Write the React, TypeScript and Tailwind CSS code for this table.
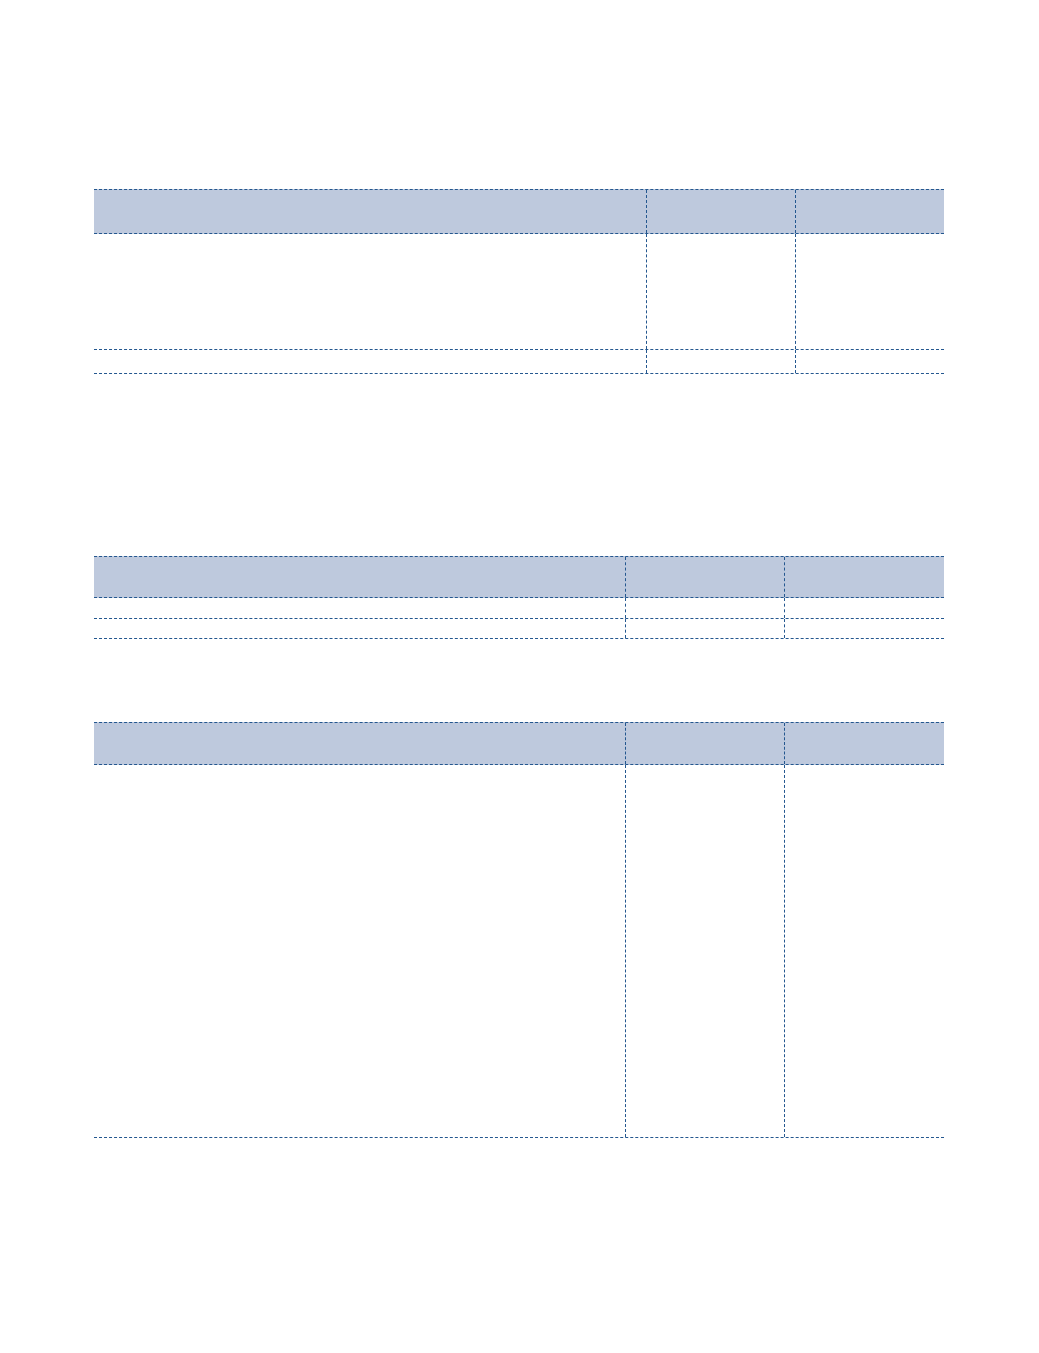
const line = "border-dashed border-[#24578f]";

type Row = { h: string; fill?: boolean };

function Table({ widths, rows }: { widths: string[]; rows: Row[] }) {
  return (
    <div className="flex flex-col w-[850px]">
      {rows.map((r, i) => (
        <div
          key={i}
          className={`flex border-b ${line} ${i === 0 ? "border-t" : ""} ${r.h} ${r.fill ? "bg-[#bec9dd]" : ""}`}
        >
          {widths.map((w, j) => (
            <div key={j} className={`${w} h-full ${j > 0 ? `border-l ${line}` : ""}`} />
          ))}
        </div>
      ))}
    </div>
  );
}

export default function App() {
  return (
    <div className="w-[1039px] min-h-[1353px] bg-white pl-[94px] pt-[189px] font-['Liberation_Sans',sans-serif]">
      <Table
        widths={["w-[552px]", "w-[149px]", "w-[149px]"]}
        rows={[{ h: "h-[45px]", fill: true }, { h: "h-[116px]" }, { h: "h-[24px]" }]}
      />
      <div className="mt-[182px]">
        <Table
          widths={["w-[531px]", "w-[159px]", "w-[160px]"]}
          rows={[{ h: "h-[42px]", fill: true }, { h: "h-[21px]" }, { h: "h-[20px]" }]}
        />
      </div>
      <div className="mt-[83px]">
        <Table
          widths={["w-[531px]", "w-[159px]", "w-[160px]"]}
          rows={[{ h: "h-[43px]", fill: true }, { h: "h-[373px]" }]}
        />
      </div>
    </div>
  );
}
